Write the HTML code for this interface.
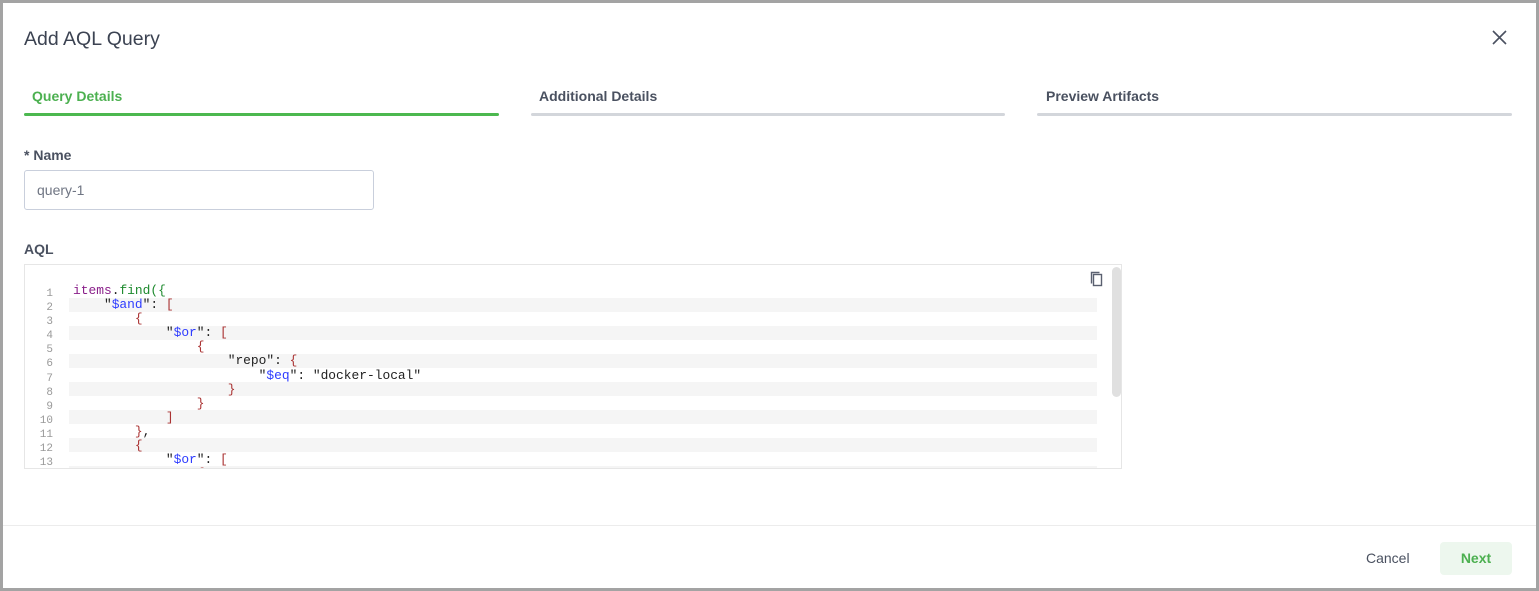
<!DOCTYPE html>
<html><head><meta charset="utf-8"><style>
*{box-sizing:border-box;margin:0;padding:0}
html,body{width:1539px;height:591px;overflow:hidden;background:#a3a3a3}
body{font-family:"Liberation Sans",sans-serif;position:relative}
.m{position:absolute;left:3px;top:3px;width:1533px;height:585px;background:#fff}
.a{position:absolute}
.title{left:24px;top:28px;font-size:19.5px;color:#3c4352}
.tab{font-size:14px;font-weight:bold;color:#4a5160;top:88px}
.bar{height:3px;top:113px;background:#d3d6db;border-radius:2px}
.code{font-family:"Liberation Mono",monospace;font-size:12.9px;white-space:pre;line-height:14.1px;color:#222}
.ln{font-family:"Liberation Mono",monospace;font-size:11px;color:#999;line-height:14.1px;text-align:right;width:34px}
.k{color:#2e3cff}.b{color:#a33}.p{color:#8a1f8a}.g{color:#1e8a2e}
</style></head><body>
<div class="m"></div>
<div class="a title">Add AQL Query</div>
<svg class="a" style="left:1491px;top:29px" width="17" height="17" viewBox="0 0 17 17"><path d="M2 2L15 15M15 2L2 15" stroke="#4a5160" stroke-width="1.6"/></svg>
<div class="a tab" style="left:32px;color:#4cb050">Query Details</div>
<div class="a tab" style="left:539px">Additional Details</div>
<div class="a tab" style="left:1046px">Preview Artifacts</div>
<div class="a bar" style="left:24px;width:475px;background:#4cb84f"></div>
<div class="a bar" style="left:531px;width:474px"></div>
<div class="a bar" style="left:1037px;width:475px"></div>
<div class="a" style="left:24px;top:147px;font-size:14px;font-weight:bold;color:#4a5160">* Name</div>
<div class="a" style="left:24px;top:170px;width:350px;height:40px;border:1px solid #c9cfdc;border-radius:3px;font-size:14px;color:#6f7583;padding:11px 12px">query-1</div>
<div class="a" style="left:24px;top:241px;font-size:14px;font-weight:bold;color:#4a5160">AQL</div>
<div class="a" style="left:24px;top:264px;width:1098px;height:205px;border:1px solid #e6e6e6;overflow:hidden">
 <div class="a" style="left:44px;top:33px;width:1028px;height:14px;background:#f5f5f5"></div>
 <div class="a" style="left:44px;top:61px;width:1028px;height:14px;background:#f5f5f5"></div>
 <div class="a" style="left:44px;top:89px;width:1028px;height:14px;background:#f5f5f5"></div>
 <div class="a" style="left:44px;top:117px;width:1028px;height:14px;background:#f5f5f5"></div>
 <div class="a" style="left:44px;top:145px;width:1028px;height:14px;background:#f5f5f5"></div>
 <div class="a" style="left:44px;top:173px;width:1028px;height:14px;background:#f5f5f5"></div>
 <div class="a" style="left:44px;top:201px;width:1028px;height:14px;background:#f5f5f5"></div>
 <div class="a ln" style="left:-6px;top:22px">1<br>2<br>3<br>4<br>5<br>6<br>7<br>8<br>9<br>10<br>11<br>12<br>13<br>14</div>
 <div class="a code" style="left:48px;top:19px"><span class="p">items</span>.<span class="g">find({</span>
    "<span class="k">$and</span>": <span class="b">[</span>
        <span class="b">{</span>
            "<span class="k">$or</span>": <span class="b">[</span>
                <span class="b">{</span>
                    "repo": <span class="b">{</span>
                        "<span class="k">$eq</span>": "docker-local"
                    <span class="b">}</span>
                <span class="b">}</span>
            <span class="b">]</span>
        <span class="b">}</span>,
        <span class="b">{</span>
            "<span class="k">$or</span>": <span class="b">[</span>
                <span class="b">{</span></div>
 <div class="a" style="left:1087px;top:2px;width:9px;height:130px;background:#e0e0e0;border-radius:5px"></div>
 <svg class="a" style="left:1063px;top:5px" width="16" height="18" viewBox="0 0 16 18"><path d="M3.5 13.5V2.5h8" fill="none" stroke="#5a6070" stroke-width="1.4"/><rect x="5.5" y="4.5" width="8" height="11" fill="none" stroke="#5a6070" stroke-width="1.4"/></svg>
</div>
<div class="a" style="left:3px;top:525px;width:1533px;height:1px;background:#ececec"></div>
<div class="a" style="left:1366px;top:550px;font-size:14px;color:#4a5160">Cancel</div>
<div class="a" style="left:1440px;top:542px;width:72px;height:33px;background:#edf7ee;border-radius:4px;font-size:14px;font-weight:bold;color:#4cb050;text-align:center;line-height:33px">Next</div>
</body></html>
